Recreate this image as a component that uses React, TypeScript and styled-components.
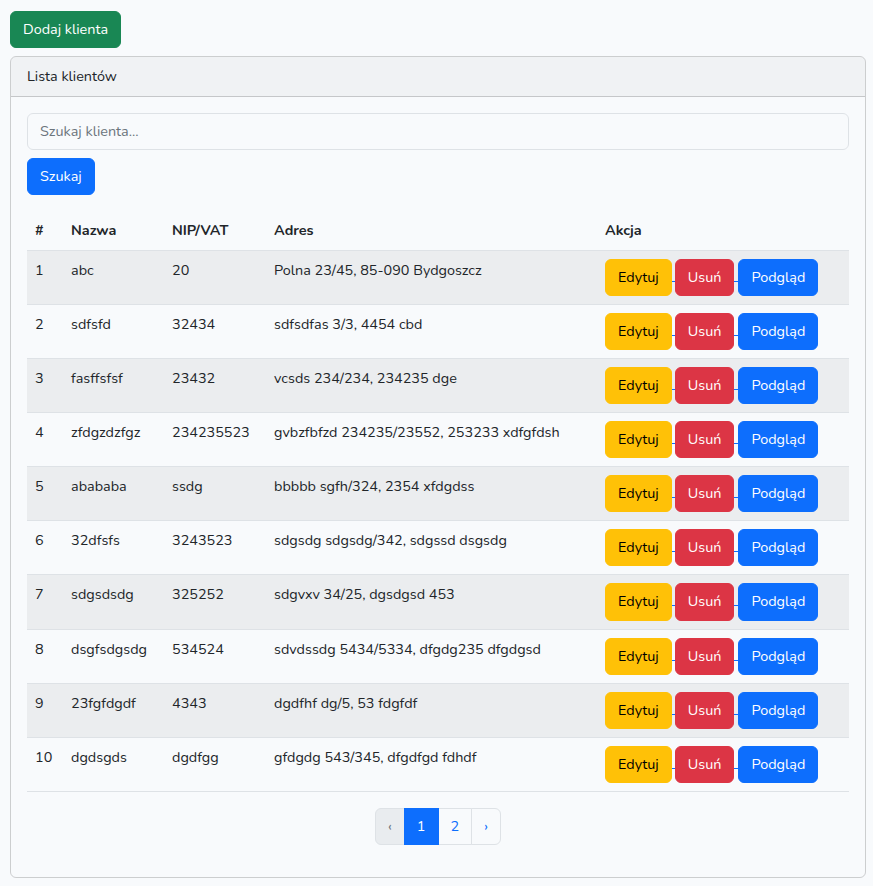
import React from "react";
import styled, { createGlobalStyle } from "styled-components";

const Global = createGlobalStyle`
  html, body { margin: 0; padding: 0; }
  body {
    background: #f8fafc;
    color: #212529;
    font-family: "Nunito", "Lato", "Noto Sans", sans-serif;
    font-size: 14.4px;
    line-height: 1.6;
  }
  * { box-sizing: border-box; }
`;

const Page = styled.div`
  padding: 11px 7px 9px 10px;
`;

const Btn = styled.button<{ $variant: "success" | "primary" | "warning" | "danger" }>`
  display: inline-block;
  font-family: inherit;
  font-size: 14.4px;
  line-height: 1.6;
  padding: 6px 12px;
  border-radius: 6px;
  border: 1px solid
    ${(p) =>
      p.$variant === "success"
        ? "#198754"
        : p.$variant === "primary"
        ? "#0d6efd"
        : p.$variant === "warning"
        ? "#ffc107"
        : "#dc3545"};
  background: ${(p) =>
    p.$variant === "success"
      ? "#198754"
      : p.$variant === "primary"
      ? "#0d6efd"
      : p.$variant === "warning"
      ? "#ffc107"
      : "#dc3545"};
  color: ${(p) => (p.$variant === "warning" ? "#000" : "#fff")};
  cursor: pointer;
`;

const TopBar = styled.div`
  display: flex;
  margin-bottom: 8px;
`;

const Card = styled.div`
  border: 1px solid rgba(0, 0, 0, 0.175);
  border-radius: 6px;
  overflow: hidden;
`;

const CardHeader = styled.div`
  padding: 8px 16px;
  background: rgba(0, 0, 0, 0.03);
  border-bottom: 1px solid rgba(0, 0, 0, 0.175);
`;

const CardBody = styled.div`
  padding: 16px;
`;

const SearchInput = styled.input`
  display: block;
  width: 100%;
  font-family: inherit;
  font-size: 14.4px;
  line-height: 1.6;
  padding: 6px 12px;
  border: 1px solid #dee2e6;
  border-radius: 6px;
  background: #f8fafc;
  color: #212529;
  margin-bottom: 8px;
  &::placeholder { color: #6c757d; }
`;

const SearchRow = styled.div`
  display: flex;
  flex-direction: column;
  align-items: flex-start;
  margin-bottom: 16px;
`;

const Table = styled.table`
  width: 100%;
  border-collapse: collapse;
  margin-bottom: 16px;
`;

const Th = styled.th<{ $w?: number }>`
  text-align: left;
  padding: 8px;
  font-weight: 700;
  border-bottom: 1px solid #dee2e6;
  vertical-align: bottom;
  width: ${(p) => (p.$w ? `${p.$w}px` : "auto")};
`;

const Tr = styled.tr<{ $striped: boolean }>`
  background: ${(p) => (p.$striped ? "rgba(0,0,0,0.05)" : "transparent")};
`;

const Td = styled.td`
  padding: 8px;
  border-bottom: 1px solid #dee2e6;
  vertical-align: top;
`;

const Actions = styled.div`
  display: flex;
  align-items: flex-start;
`;

const Sep = styled.span<{ $w: number }>`
  display: block;
  width: ${(p) => p.$w}px;
  height: 23px;
  border-bottom: 1px solid #0d6efd;
`;

const Pagination = styled.ul`
  display: flex;
  justify-content: center;
  list-style: none;
  margin: 0 0 16px;
  padding: 0;
`;

const PageLink = styled.li<{ $state?: "active" | "disabled"; $first?: boolean; $last?: boolean }>`
  padding: 6px 12px;
  border: 1px solid ${(p) => (p.$state === "active" ? "#0d6efd" : "#dee2e6")};
  margin-left: ${(p) => (p.$first ? "0" : "-1px")};
  background: ${(p) =>
    p.$state === "active" ? "#0d6efd" : p.$state === "disabled" ? "#e9ecef" : "#f8fafc"};
  color: ${(p) =>
    p.$state === "active" ? "#fff" : p.$state === "disabled" ? "#6c757d" : "#0d6efd"};
  border-radius: ${(p) => (p.$first ? "6px 0 0 6px" : p.$last ? "0 6px 6px 0" : "0")};
  position: relative;
  z-index: ${(p) => (p.$state === "active" ? 1 : 0)};
`;

const rows = [
  ["1", "abc", "20", "Polna 23/45, 85-090 Bydgoszcz"],
  ["2", "sdfsfd", "32434", "sdfsdfas 3/3, 4454 cbd"],
  ["3", "fasffsfsf", "23432", "vcsds 234/234, 234235 dge"],
  ["4", "zfdgzdzfgz", "234235523", "gvbzfbfzd 234235/23552, 253233 xdfgfdsh"],
  ["5", "abababa", "ssdg", "bbbbb sgfh/324, 2354 xfdgdss"],
  ["6", "32dfsfs", "3243523", "sdgsdg sdgsdg/342, sdgssd dsgsdg"],
  ["7", "sdgsdsdg", "325252", "sdgvxv 34/25, dgsdgsd 453"],
  ["8", "dsgfsdgsdg", "534524", "sdvdssdg 5434/5334, dfgdg235 dfgdgsd"],
  ["9", "23fgfdgdf", "4343", "dgdfhf dg/5, 53 fdgfdf"],
  ["10", "dgdsgds", "dgdfgg", "gfdgdg 543/345, dfgdfgd fdhdf"],
];

export default function App() {
  return (
    <Page>
      <Global />
      <TopBar>
        <Btn $variant="success">Dodaj klienta</Btn>
      </TopBar>
      <Card>
        <CardHeader>Lista klientów</CardHeader>
        <CardBody>
          <SearchRow>
            <SearchInput placeholder="Szukaj klienta..." />
            <Btn $variant="primary">Szukaj</Btn>
          </SearchRow>
          <Table>
            <thead>
              <tr>
                <Th $w={36}>#</Th>
                <Th $w={101}>Nazwa</Th>
                <Th $w={102}>NIP/VAT</Th>
                <Th $w={331}>Adres</Th>
                <Th>Akcja</Th>
              </tr>
            </thead>
            <tbody>
              {rows.map((r, i) => (
                <Tr key={r[0]} $striped={i % 2 === 0}>
                  <Td>{r[0]}</Td>
                  <Td>{r[1]}</Td>
                  <Td>{r[2]}</Td>
                  <Td>{r[3]}</Td>
                  <Td>
                    <Actions>
                      <Btn $variant="warning">Edytuj</Btn>
                      <Sep $w={3} />
                      <Btn $variant="danger">Usuń</Btn>
                      <Sep $w={4} />
                      <Btn $variant="primary">Podgląd</Btn>
                    </Actions>
                  </Td>
                </Tr>
              ))}
            </tbody>
          </Table>
          <Pagination>
            <PageLink $state="disabled" $first>‹</PageLink>
            <PageLink $state="active">1</PageLink>
            <PageLink>2</PageLink>
            <PageLink $last>›</PageLink>
          </Pagination>
        </CardBody>
      </Card>
    </Page>
  );
}
